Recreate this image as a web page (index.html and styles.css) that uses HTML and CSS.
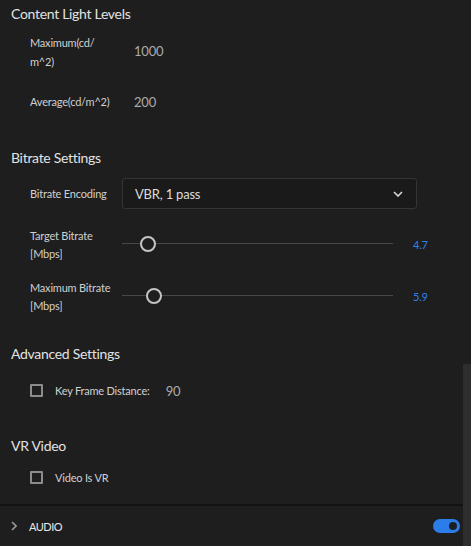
FILE: index.html
```html
<!DOCTYPE html>
<html>
<head>
<meta charset="utf-8">
<link rel="stylesheet" href="styles.css">
</head>
<body>
<div class="panel">
  <div class="header h1">Content Light Levels</div>
  <div class="row r-max">
    <div class="label">Maximum(cd/<br>m^2)</div>
    <div class="val">1000</div>
  </div>
  <div class="row r-avg">
    <div class="label">Average(cd/m^2)</div>
    <div class="val">200</div>
  </div>

  <div class="header h2">Bitrate Settings</div>
  <div class="row r-enc">
    <div class="label">Bitrate Encoding</div>
    <div class="select">
      <span>VBR, 1 pass</span>
      <svg class="chev" width="10" height="6" viewBox="0 0 10 6"><path d="M1 1 L5 5 L9 1" fill="none" stroke="#d8d8d8" stroke-width="1.6"/></svg>
    </div>
  </div>
  <div class="row two r-target">
    <div class="label">Target Bitrate<br>[Mbps]</div>
    <div class="slider"><div class="track"></div><div class="knob k1"></div></div>
    <div class="num">4.7</div>
  </div>
  <div class="row two r-maxb">
    <div class="label">Maximum Bitrate<br>[Mbps]</div>
    <div class="slider"><div class="track"></div><div class="knob k2"></div></div>
    <div class="num">5.9</div>
  </div>

  <div class="header h3">Advanced Settings</div>
  <div class="check r-kfd">
    <div class="box"></div>
    <div class="clabel">Key Frame Distance:</div>
    <div class="cval">90</div>
  </div>

  <div class="header h4">VR Video</div>
  <div class="check r-vr">
    <div class="box"></div>
    <div class="clabel">Video Is VR</div>
  </div>

  <div class="divider"></div>
  <div class="footer">
    <svg class="fchev" width="6" height="10" viewBox="0 0 6 10"><path d="M1 1 L5 5 L1 9" fill="none" stroke="#9a9a9a" stroke-width="1.6"/></svg>
    <div class="ftitle">AUDIO</div>
    <div class="toggle"><div class="tknob"></div></div>
  </div>
  <div class="scrollbar"></div>
</div>
</body>
</html>
```
FILE: styles.css
```css
html, body {
  margin: 0;
  padding: 0;
  background: #1e1e1e;
}
.panel {
  position: relative;
  width: 471px;
  height: 546px;
  overflow: hidden;
  display: flex;
  flex-direction: column;
  font-family: "Lato", "Open Sans", sans-serif;
  color: #d2d2d2;
}
.header {
  height: 26px;
  line-height: 27px;
  font-size: 14px;
  color: #e2e2e2;
  padding-left: 11px;
  letter-spacing: -0.3px;
}
.h2 { margin-top: 33px; }
.h3 { margin-top: 26px; }
.h4 { margin-top: 32px; }

.row {
  display: flex;
  align-items: center;
  padding-left: 30px;
  font-size: 11px;
  letter-spacing: -0.2px;
}
.row .label {
  width: 92px;
  flex: none;
  color: #d0d0d0;
}
.row .val {
  margin-left: 12px;
  font-size: 13px;
  color: #ababab;
}
.r-max { margin-top: 6px; height: 38px; }
.r-max .label { line-height: 19px; padding-top: 1px; }
.r-avg { margin-top: 21px; height: 20px; }
.r-avg .label, .r-avg .val { padding-top: 1px; }

.r-enc { margin-top: 8px; height: 31px; }
.select {
  box-sizing: border-box;
  width: 295px;
  height: 31px;
  border: 1px solid #353535;
  border-radius: 3px;
  background: #1a1a1a;
  display: flex;
  align-items: center;
  justify-content: space-between;
  padding: 1px 13px 0 12px;
  font-size: 13px;
  color: #dcdcdc;
}
.two { height: 36px; }
.two .label { line-height: 18px; padding-top: 1px; }
.r-target { margin-top: 17px; }
.r-maxb { margin-top: 16px; }
.slider {
  position: relative;
  width: 271px;
  height: 16px;
  flex: none;
}
.track {
  position: absolute;
  left: 0;
  right: 0;
  top: 7px;
  height: 1px;
  background: #474747;
}
.knob {
  position: absolute;
  top: 0;
  width: 12px;
  height: 12px;
  border: 2px solid #c4c4c4;
  border-radius: 50%;
  background: #1e1e1e;
}
.k1 { left: 18px; }
.k2 { left: 24px; }
.num {
  margin-left: 20px;
  color: #2f82e8;
  font-size: 11px;
}

.check {
  display: flex;
  align-items: center;
  height: 20px;
  padding-left: 30px;
  font-size: 11px;
  letter-spacing: -0.2px;
}
.r-kfd { margin-top: 14px; }
.r-vr { margin-top: 9px; }
.box {
  box-sizing: border-box;
  width: 13px;
  height: 13px;
  border: 2px solid #8c8c8c;
  border-radius: 1px;
  flex: none;
}
.clabel {
  margin-left: 12px;
  color: #d0d0d0;
  padding-top: 1px;
}
.cval {
  margin-left: 16px;
  font-size: 13px;
  color: #ababab;
  padding-top: 1px;
}

.divider {
  margin-top: 17px;
  width: 463px;
  height: 2px;
  background: #121212;
}
.footer {
  height: 40px;
  width: 463px;
  display: flex;
  align-items: center;
  padding-left: 11px;
  box-sizing: border-box;
}
.fchev { flex: none; }
.ftitle {
  margin-left: 12px;
  font-size: 11px;
  color: #e8e8e8;
  letter-spacing: -0.5px;
  padding-top: 1px;
}
.toggle {
  margin-left: auto;
  margin-right: 3px;
  width: 27px;
  height: 14px;
  border-radius: 7px;
  background: #2b7de9;
  position: relative;
}
.tknob {
  position: absolute;
  right: 1px;
  top: 1px;
  width: 8px;
  height: 8px;
  border: 2px solid #2b7de9;
  border-radius: 50%;
  background: #1c1f24;
}
.scrollbar {
  position: absolute;
  left: 463px;
  top: 364px;
  width: 8px;
  height: 182px;
  background: #2e2e2e;
  border-radius: 2px 0 0 0;
}
```
